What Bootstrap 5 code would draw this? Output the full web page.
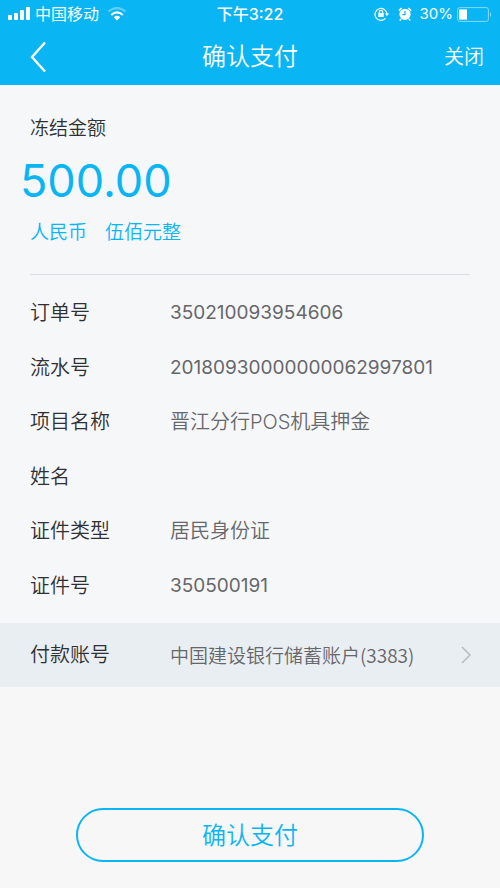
<!DOCTYPE html>
<html lang="zh-CN">
<head>
<meta charset="utf-8">
<meta name="viewport" content="width=device-width, initial-scale=1">
<title>确认支付</title>
<link href="https://cdn.jsdelivr.net/npm/bootstrap@5.3.0/dist/css/bootstrap.min.css" rel="stylesheet">
<style>
:root { --sky: #09b5f3; --gutter: 30px; }
body { font-family: Inter, "Noto Sans CJK SC", sans-serif; font-size: 20px; line-height: 28px; font-weight: 350; color: #2f3033; background: #f7f7f7; }
.app-head { background: var(--sky); }
.status-bar { height: 28px; font-size: 16px; font-weight: 400; line-height: 28px; padding: 0 8px; }
.status-bar > div { flex: 1 1 0; }
.clock { font-weight: 500; }
.battery-text { font-size: 15px; }
.title-bar { height: 57px; padding: 0 16px; }
.title-bar > div { flex: 1 1 0; }
.back-link { margin-left: 14px; }
.page-title { font-size: 24px; font-weight: 350; line-height: 32px; }
.details { background: #f6f7f9; }
.summary { margin: 0 var(--gutter); padding: 30px 0 27px; border-bottom: 1px solid #dcdde0; }
.caption-text { font-size: 19px; }
.in-words { gap: 18px; }
.amount { font-size: 45px; line-height: 56px; margin: 10px 0 10px -10px; font-weight: 400; }
.sky-text { color: var(--sky); }
.info-grid { display: grid; grid-auto-rows: 1fr; min-height: 327px; margin: 11px var(--gutter) 10px; }
.info-label { flex: 0 0 140px; font-weight: 350; }
.info-value { color: #66676a; }
.digits { font-size: 19px; font-weight: 400; }
.account-row { padding: 18px 29px 18px var(--gutter); background: #e9eef2; }
.account-name { font-family: "Noto Sans CJK SC", sans-serif; font-size: 19px; }
.confirm-area { padding: 24px 76px 26px; }
.btn-confirm { --bs-btn-color: var(--sky); --bs-btn-border-color: var(--sky); --bs-btn-hover-color: #fff; --bs-btn-hover-bg: var(--sky); --bs-btn-hover-border-color: var(--sky); border-width: 2px; font-size: 24px; font-weight: 350; line-height: 32px; padding: 10px 24px 8px; }
</style>
</head>
<body>
<div class="min-vh-100 d-flex flex-column">
  <header class="app-head text-white">
    <div class="status-bar d-flex align-items-center">
      <div class="d-flex align-items-center">
        <svg width="23" height="14" viewBox="0 0 23 14" fill="#fff" aria-hidden="true"><rect x="0" y="8" width="4" height="5" rx="1"/><rect x="6" y="6" width="4" height="7" rx="1"/><rect x="12" y="3" width="4" height="10" rx="1"/><rect x="18" y="0" width="4" height="13" rx="1"/></svg>
        <span class="ms-1">中国移动</span>
        <svg class="ms-2" width="20" height="14" viewBox="0 0 20 14" fill="none" stroke="#fff" stroke-width="2.2" aria-hidden="true"><path d="M1.500 4.500Q10-2.500 18.500 4.500" opacity=".35"/><path d="M4.200 8Q10 2.800 15.800 8"/><path d="M6.700 10.200Q10 7.400 13.300 10.200L10 13.400Z" fill="#fff" stroke="none"/></svg>
      </div>
      <span class="clock">下午3:22</span>
      <div class="d-flex align-items-center justify-content-end">
        <svg width="16" height="14" viewBox="0 0 16 14" fill="none" stroke="#fff" stroke-width="1.2" aria-hidden="true"><path d="M11.500 11.400A6 6 0 1 1 13 7"/><path d="M10.800 6.400H15.200L13 9Z" fill="#fff" stroke="none"/><rect x="4.300" y="6" width="5.400" height="4" fill="#fff" stroke="none"/><path d="M5.300 6V5a1.700 1.700 0 0 1 3.400 0V6"/></svg>
        <svg class="ms-2" width="14" height="14" viewBox="0 0 14 14" aria-hidden="true"><circle cx="7" cy="7.300" r="5.600" fill="#fff"/><path d="M.9 3.600 3.700 1M10.300 1l2.800 2.600M3 12l-1.200 1.400M11 12l1.200 1.400" stroke="#fff" stroke-width="1.600"/><path d="M7 4V7.600H4.400" fill="none" stroke="#09b5f3" stroke-width="1.200"/></svg>
        <span class="battery-text ms-2">30%</span>
        <svg class="ms-1" width="35" height="15" viewBox="0 0 35 15" aria-hidden="true"><rect x=".6" y=".6" width="30.800" height="13.800" rx="2" fill="none" stroke="#fff" stroke-opacity=".5"/><rect x="2" y="2.400" width="8" height="10.200" fill="#fff"/><path d="M33 5q2 2.500 0 5z" fill="#fff" fill-opacity=".6"/></svg>
      </div>
    </div>
    <nav class="title-bar d-flex align-items-center" aria-label="页面导航">
      <div class="d-flex"><a class="back-link text-white" href="#" aria-label="返回"><svg class="d-block" width="17" height="32" viewBox="0 0 17 32" fill="none" stroke="#fff" stroke-width="2.400" aria-hidden="true"><path d="M15 1.500 2 16 15 30.500"/></svg></a></div>
      <h1 class="page-title m-0">确认支付</h1>
      <div class="text-end"><a class="text-white text-decoration-none" href="#">关闭</a></div>
    </nav>
  </header>

  <main class="flex-grow-1 d-flex flex-column">
    <div class="details">
      <section class="summary">
        <div class="caption-text">冻结金额</div>
        <div class="amount sky-text">500.00</div>
        <div class="caption-text in-words sky-text d-flex"><span>人民币</span><span>伍佰元整</span></div>
      </section>
      <dl class="info-grid">
        <div class="d-flex align-items-center"><dt class="info-label">订单号</dt><dd class="info-value digits m-0">350210093954606</dd></div>
        <div class="d-flex align-items-center"><dt class="info-label">流水号</dt><dd class="info-value digits m-0">20180930000000062997801</dd></div>
        <div class="d-flex align-items-center"><dt class="info-label">项目名称</dt><dd class="info-value m-0">晋江分行POS机具押金</dd></div>
        <div class="d-flex align-items-center"><dt class="info-label">姓名</dt><dd class="info-value m-0"></dd></div>
        <div class="d-flex align-items-center"><dt class="info-label">证件类型</dt><dd class="info-value m-0">居民身份证</dd></div>
        <div class="d-flex align-items-center"><dt class="info-label">证件号</dt><dd class="info-value digits m-0">350500191</dd></div>
      </dl>
      <a class="account-row d-flex align-items-center text-reset text-decoration-none" href="#">
        <span class="info-label">付款账号</span>
        <span class="info-value account-name flex-grow-1">中国建设银行储蓄账户(3383)</span>
        <svg width="10" height="18" viewBox="0 0 10 18" fill="none" stroke="#b7babd" stroke-width="1.500" aria-hidden="true"><path d="M1 1 9 9 1 17"/></svg>
      </a>
    </div>
    <div class="confirm-area mt-auto">
      <button type="button" class="btn btn-confirm rounded-pill w-100">确认支付</button>
    </div>
  </main>
</div>
<script src="https://cdn.jsdelivr.net/npm/bootstrap@5.3.0/dist/js/bootstrap.bundle.min.js"></script>
</body>
</html>
